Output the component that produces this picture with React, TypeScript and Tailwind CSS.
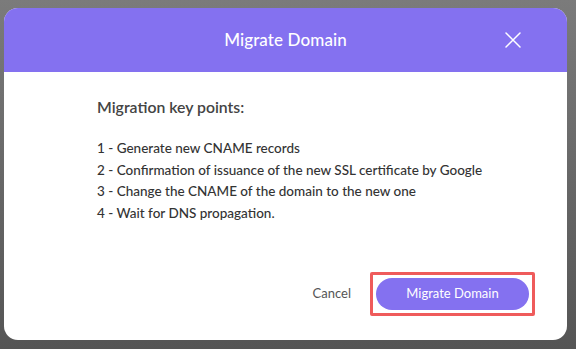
import React from "react";

export default function App() {
  return (
    <div
      className="w-[576px] h-[349px] pt-[8px] pl-[4px] bg-gradient-to-b from-[#7b7b7b] to-[#555555]"
      style={{ fontFamily: "Lato, 'Noto Sans', sans-serif" }}
    >
      <div className="w-[563px] h-[332px] rounded-[14px] overflow-hidden bg-white flex flex-col">
        <div className="relative h-[64px] bg-[#8471f0] flex items-center justify-center shrink-0">
          <span className="text-white text-[17px] font-medium tracking-[0.1px]">Migrate Domain</span>
          <button className="absolute right-[46px] top-[24px] w-[16px] h-[16px] flex items-center justify-center">
            <svg width="16" height="16" viewBox="0 0 16 16" fill="none">
              <path d="M1 1L15 15M15 1L1 15" stroke="white" strokeWidth="1.5" strokeLinecap="round" />
            </svg>
          </button>
        </div>
        <div className="flex-1 flex flex-col pl-[93px] pt-[25px]">
          <div className="text-[15.8px] font-semibold text-[#444444] leading-[20px]">Migration key points:</div>
          <ul className="mt-[22px] flex flex-col gap-[3.5px] text-[13.5px] font-medium text-[#333333] leading-[18px]">
            <li>1 - Generate new CNAME records</li>
            <li>2 - Confirmation of issuance of the new SSL certificate by Google</li>
            <li>3 - Change the CNAME of the domain to the new one</li>
            <li>4 - Wait for DNS propagation.</li>
          </ul>
        </div>
        <div className="flex items-center justify-end pr-[32px] pb-[24px] gap-[19px]">
          <button className="text-[13px] text-[#555555]">Cancel</button>
          <div className="border-[3px] border-[#ef5b5b] rounded-[2px] p-[3px]">
            <button className="w-[153px] h-[32px] rounded-full bg-[#8471f0] text-white text-[13px]">
              Migrate Domain
            </button>
          </div>
        </div>
      </div>
    </div>
  );
}
